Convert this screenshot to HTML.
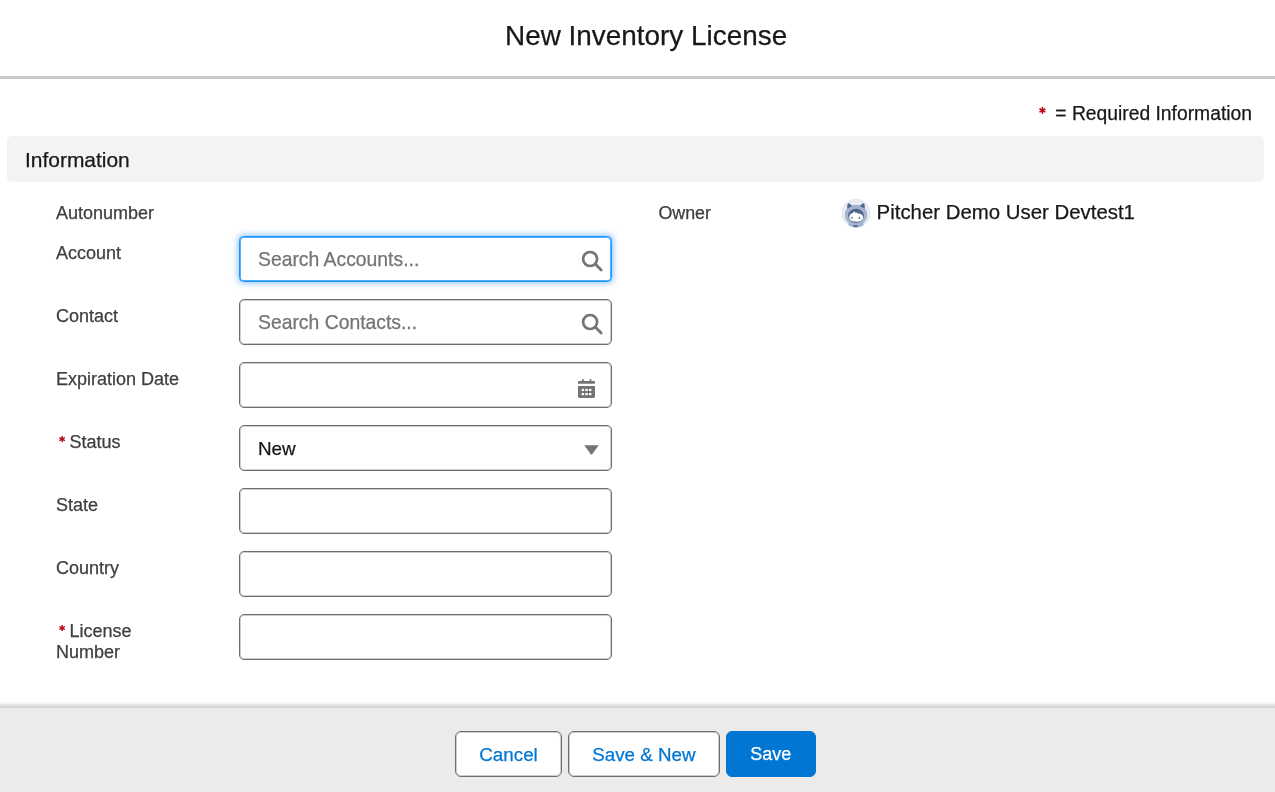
<!DOCTYPE html>
<html>
<head>
<meta charset="utf-8">
<style>
html,body{margin:0;padding:0;}
body{width:1275px;height:792px;position:relative;overflow:hidden;background:#fff;font-family:"Liberation Sans",sans-serif;color:#181818;}
.ast{position:absolute;}
.wrap{position:absolute;left:0;top:0;width:1275px;height:792px;will-change:transform;}
.t{position:absolute;white-space:nowrap;line-height:1;-webkit-text-stroke:0.25px currentColor;}
.hdr-line{position:absolute;left:0;top:76px;width:1275px;height:3px;background:#c9c9c9;}
.title{left:505px;top:22.4px;font-size:27.9px;color:#181818;}
.req{color:#ba0517;}
.reqinfo{left:1055.3px;top:104.2px;font-size:19.3px;color:#181818;}
.section{position:absolute;left:7px;top:136px;width:1257px;height:46px;background:#f3f3f3;border-radius:5px;}
.sectitle{left:25.0px;top:149.5px;font-size:20.95px;color:#181818;}
.lbl{left:56px;font-size:18px;color:#3e3e3c;}
.inp{position:absolute;left:239px;width:373px;height:46px;box-sizing:border-box;border:1px solid #6e6e6e;box-shadow:inset 0 0 0 1px rgba(116,116,116,0.35);border-radius:5px;background:#fff;}
.inp.focus{border:1px solid #1b96ff;border-radius:4.5px;box-shadow:inset 0 0 0 1px rgba(27,150,255,0.75),0 0 6px 0.5px rgba(27,130,235,0.5);}
.ph{font-size:19.35px;color:#747474;}
.val{font-size:18.3px;color:#181818;}
.footer{position:absolute;left:0;top:708px;width:1275px;height:84px;background:#ecebea;}
.fshadow{position:absolute;left:0;top:701px;width:1275px;height:7px;background:linear-gradient(to bottom,rgba(0,0,0,0) 0px,rgba(0,0,0,0.012) 1px,rgba(0,0,0,0.03) 2px,rgba(0,0,0,0.06) 3px,rgba(0,0,0,0.10) 4px,rgba(0,0,0,0.14) 5px,rgba(0,0,0,0.165) 6px,rgba(0,0,0,0.165) 7px);}
.btn{position:absolute;top:731px;height:46px;box-sizing:border-box;border:1px solid #6e6e6e;box-shadow:inset 0 0 0 1px rgba(116,116,116,0.35);border-radius:6px;background:#fff;}
.btn-brand{background:#0176d3;border-color:#0176d3;box-shadow:none;}
.btxt{font-size:18.6px;color:#0176d3;}
</style>
</head>
<body>
<div class="wrap">
<div class="t title">New Inventory License</div>
<div class="hdr-line"></div>

<svg class="ast" style="left:1038.9px;top:107.1px;" width="6.8" height="6.8" viewBox="-6 -6 12 12"><g stroke="#ba0517" stroke-width="2.8" stroke-linecap="butt"><line x1="0" y1="-6" x2="0" y2="6"/><line x1="-5.2" y1="-3" x2="5.2" y2="3"/><line x1="-5.2" y1="3" x2="5.2" y2="-3"/></g></svg>
<div class="t reqinfo">= Required Information</div>

<div class="section"></div>
<div class="t sectitle">Information</div>

<!-- labels -->
<div class="t lbl" style="top:203.8px;">Autonumber</div>
<div class="t lbl" style="top:243.6px;">Account</div>
<div class="t lbl" style="top:307px;">Contact</div>
<div class="t lbl" style="top:370px;">Expiration Date</div>
<svg class="ast" style="left:58.8px;top:435.8px;" width="6.3" height="6.3" viewBox="-6 -6 12 12"><g stroke="#ba0517" stroke-width="2.8"><line x1="0" y1="-6" x2="0" y2="6"/><line x1="-5.2" y1="-3" x2="5.2" y2="3"/><line x1="-5.2" y1="3" x2="5.2" y2="-3"/></g></svg>
<div class="t lbl" style="top:433px;left:69.5px;">Status</div>
<div class="t lbl" style="top:496px;">State</div>
<div class="t lbl" style="top:559px;">Country</div>
<svg class="ast" style="left:58.8px;top:624.8px;" width="6.3" height="6.3" viewBox="-6 -6 12 12"><g stroke="#ba0517" stroke-width="2.8"><line x1="0" y1="-6" x2="0" y2="6"/><line x1="-5.2" y1="-3" x2="5.2" y2="3"/><line x1="-5.2" y1="3" x2="5.2" y2="-3"/></g></svg>
<div class="t lbl" style="top:622px;left:69.5px;">License</div>
<div class="t lbl" style="top:643px;">Number</div>

<!-- inputs -->
<div class="inp focus" style="top:236px;left:238.6px;"></div>
<div class="t ph" style="left:258px;top:250.2px;">Search Accounts...</div>
<svg style="position:absolute;left:580px;top:249px;" width="24" height="24" viewBox="0 0 24 24">
  <circle cx="10.1" cy="10" r="7" fill="none" stroke="#747474" stroke-width="2.7"/>
  <line x1="15.2" y1="15.1" x2="21.2" y2="21.1" stroke="#747474" stroke-width="2.8" stroke-linecap="round"/>
</svg>

<div class="inp" style="top:299px;"></div>
<div class="t ph" style="left:258px;top:313.2px;">Search Contacts...</div>
<svg style="position:absolute;left:580px;top:312px;" width="24" height="24" viewBox="0 0 24 24">
  <circle cx="10.1" cy="10" r="7" fill="none" stroke="#747474" stroke-width="2.7"/>
  <line x1="15.2" y1="15.1" x2="21.2" y2="21.1" stroke="#747474" stroke-width="2.8" stroke-linecap="round"/>
</svg>

<div class="inp" style="top:362px;"></div>
<svg style="position:absolute;left:578px;top:379px;" width="17" height="19" viewBox="0 0 17 19">
  <rect x="4" y="0" width="1.8" height="3" rx="0.9" fill="#747474"/>
  <rect x="11.6" y="0" width="1.8" height="3" rx="0.9" fill="#747474"/>
  <rect x="0" y="2" width="17" height="2.8" rx="0.6" fill="#747474"/>
  <path d="M0 7 H17 V17.6 Q17 19 15.6 19 H1.4 Q0 19 0 17.6 Z" fill="#747474"/>
  <g fill="#fff">
    <rect x="3.7" y="9.9" width="2.4" height="2.2"/>
    <rect x="7.4" y="9.9" width="2.4" height="2.2"/>
    <rect x="11" y="9.9" width="2.4" height="2.2"/>
    <rect x="3.7" y="14" width="2.4" height="2.2"/>
    <rect x="7.4" y="14" width="2.4" height="2.2"/>
    <rect x="11" y="14" width="2.4" height="2.2"/>
  </g>
</svg>

<div class="inp" style="top:425px;"></div>
<div class="t val" style="left:258px;top:440.1px;font-size:18.85px;">New</div>
<svg style="position:absolute;left:583.6px;top:445.2px;" width="15" height="10" viewBox="0 0 15 10">
  <path d="M0.3 0.3 H14.7 L8.2 9.2 Q7.5 10 6.8 9.2 Z" fill="#747474"/>
</svg>

<div class="inp" style="top:488px;"></div>
<div class="inp" style="top:551px;"></div>
<div class="inp" style="top:614px;"></div>

<!-- owner -->
<div class="t lbl" style="left:658.4px;top:204.5px;font-size:17.85px;">Owner</div>
<svg style="position:absolute;left:842px;top:199px;" width="29" height="29" viewBox="0 0 29 29">
  <defs><clipPath id="cc"><circle cx="14" cy="14.2" r="14.1"/></clipPath></defs>
  <circle cx="14" cy="14.2" r="14" fill="#e9ecf0" stroke="#c9dcf2" stroke-width="0.6"/>
  <g clip-path="url(#cc)">
    <path d="M14 5.8 C20.5 5.8 25.1 10 25.1 15.5 C25.1 19.5 23.5 22.2 21.5 23.6 L21.5 30 L6.5 30 L6.5 23.6 C4.5 22.2 2.9 19.5 2.9 15.5 C2.9 10 7.5 5.8 14 5.8 Z" fill="#a3b3cc"/>
    <path d="M5.3 9.4 C5.0 6.5 5.6 4.3 6.6 4.2 C7.6 4.1 9.2 5.6 10.2 7.2 Z" fill="#536a8f"/>
    <path d="M22.7 9.4 C23.0 6.5 22.4 4.3 21.4 4.2 C20.4 4.1 18.8 5.6 17.8 7.2 Z" fill="#536a8f"/>
    <ellipse cx="14" cy="16.8" rx="7.9" ry="7.1" fill="#4d6489"/>
    <path d="M7.2 18.6 C7.2 15.8 8.6 14.3 10.6 14.2 L12.2 12.0 L13.2 13.9 C14.2 13.3 15.2 13.6 15.8 14.4 C17.2 14.3 19.4 14.6 20.4 16.2 C20.9 17 21 17.8 21 18.7 C21 21.3 18 22.7 14 22.7 C10 22.7 7.2 21.4 7.2 18.6 Z" fill="#fff"/>
    <ellipse cx="9.9" cy="18.7" rx="0.8" ry="0.95" fill="#4d6489"/>
    <ellipse cx="17.4" cy="19.0" rx="0.8" ry="0.95" fill="#4d6489"/>
    <circle cx="13.6" cy="28.7" r="2.8" fill="#536a8f"/>
  </g>
</svg>
<div class="t" style="left:876.6px;top:201.5px;font-size:20.4px;color:#181818;">Pitcher Demo User Devtest1</div>

<!-- footer -->
<div class="fshadow"></div>
<div class="footer"></div>
<div class="btn" style="left:455px;width:107px;"></div>
<div class="t btxt" style="left:479.3px;top:746.3px;font-size:18.8px;">Cancel</div>
<div class="btn" style="left:568px;width:152px;"></div>
<div class="t btxt" style="left:592.3px;top:746.3px;font-size:18.75px;">Save &amp; New</div>
<div class="btn btn-brand" style="left:726px;width:90px;"></div>
<div class="t btxt" style="left:750.3px;top:746.3px;color:#fff;font-size:17.95px;">Save</div>
</div>
</body>
</html>
